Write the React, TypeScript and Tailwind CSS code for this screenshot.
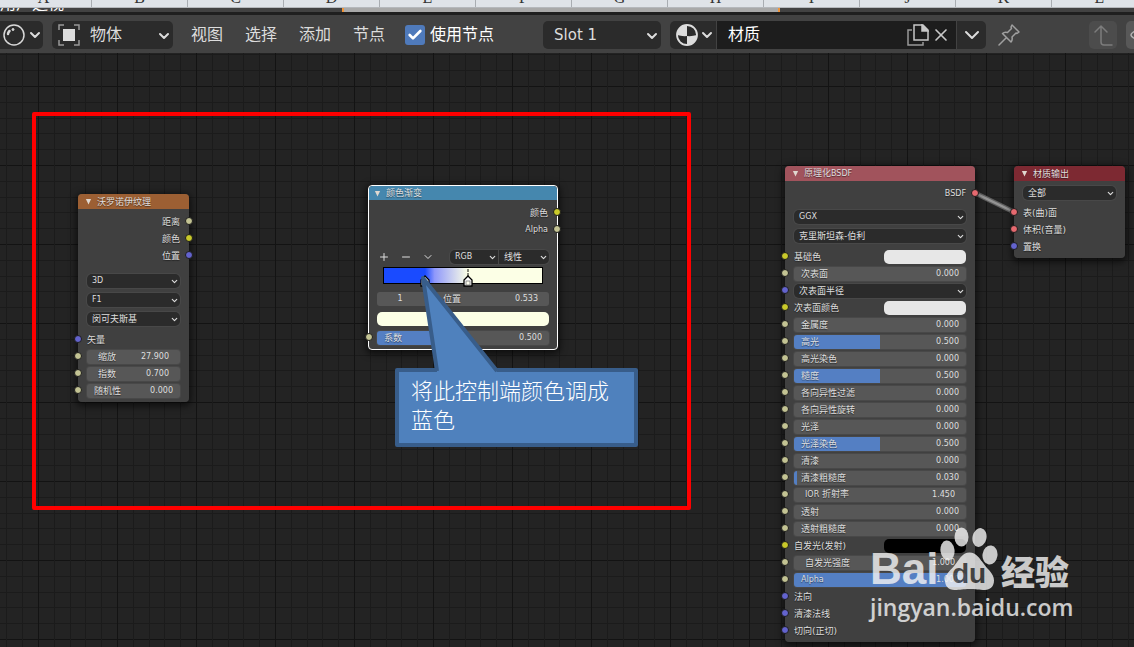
import type { ReactNode } from "react";
import { Check, ChevronDown, Minus, Plus, X } from "lucide-react";
import { clsx } from "clsx";

type SocketKind = "value" | "color" | "vector" | "shader";

interface Field {
  kind: SocketKind;
  label: string;
  type: "value" | "swatch" | "select" | "plain";
  value?: string;
  fill?: number;
  indent?: boolean;
}

const SOCKET_COLORS: Record<SocketKind, string> = {
  value: "bg-[#c3c393]",
  color: "bg-[#c9c92a]",
  vector: "bg-[#6363ce]",
  shader: "bg-[#e6696f]",
};

const SHEET_COLUMNS = ["A", "B", "C", "D", "E", "F", "G", "H", "I", "J", "K", "L"];

const MENUS = ["视图", "选择", "添加", "节点"];

const VORONOI_FIELDS: Field[] = [
  { kind: "vector", label: "矢量", type: "plain" },
  { kind: "value", label: "缩放", type: "value", value: "27.900", indent: true },
  { kind: "value", label: "指数", type: "value", value: "0.700", indent: true },
  { kind: "value", label: "随机性", type: "value", value: "0.000" },
];

const BSDF_FIELDS: Field[] = [
  { kind: "color", label: "基础色", type: "swatch", value: "#e7e7e7" },
  { kind: "value", label: "次表面", type: "value", value: "0.000" },
  { kind: "vector", label: "次表面半径", type: "select" },
  { kind: "color", label: "次表面颜色", type: "swatch", value: "#e7e7e7" },
  { kind: "value", label: "金属度", type: "value", value: "0.000" },
  { kind: "value", label: "高光", type: "value", value: "0.500", fill: 50 },
  { kind: "value", label: "高光染色", type: "value", value: "0.000" },
  { kind: "value", label: "糙度", type: "value", value: "0.500", fill: 50 },
  { kind: "value", label: "各向异性过滤", type: "value", value: "0.000" },
  { kind: "value", label: "各向异性旋转", type: "value", value: "0.000" },
  { kind: "value", label: "光泽", type: "value", value: "0.000" },
  { kind: "value", label: "光泽染色", type: "value", value: "0.500", fill: 50 },
  { kind: "value", label: "清漆", type: "value", value: "0.000" },
  { kind: "value", label: "清漆粗糙度", type: "value", value: "0.030", fill: 2 },
  { kind: "value", label: "IOR 折射率", type: "value", value: "1.450", indent: true },
  { kind: "value", label: "透射", type: "value", value: "0.000" },
  { kind: "value", label: "透射粗糙度", type: "value", value: "0.000" },
  { kind: "color", label: "自发光(发射)", type: "swatch", value: "#000000" },
  { kind: "value", label: "自发光强度", type: "value", value: "1.000", indent: true },
  { kind: "value", label: "Alpha", type: "value", value: "1.000", fill: 100 },
  { kind: "vector", label: "法向", type: "plain" },
  { kind: "vector", label: "清漆法线", type: "plain" },
  { kind: "vector", label: "切向(正切)", type: "plain" },
];

// Latin runs are set one pixel smaller than the Chinese glyphs beside them
function Label({ text }: { text: string }) {
  return (
    <span className="whitespace-nowrap">
      {text.split(/([A-Za-z]+)/).map((part, i) =>
        /[A-Za-z]/.test(part) ? (
          <span key={i} className="text-[8px]">
            {part}
          </span>
        ) : (
          part
        ),
      )}
    </span>
  );
}

function Socket({ kind, side }: { kind: SocketKind; side: "left" | "right" }) {
  return (
    <span
      className={clsx(
        "absolute top-1 size-2 rounded-full border border-[#1c1c1c]",
        SOCKET_COLORS[kind],
        side === "left" ? "-left-1" : "-right-1",
      )}
    />
  );
}

function NodeSelect({ label, className }: { label: string; className: string }) {
  return (
    <div className={clsx("relative h-[14px]", className)}>
      <select
        aria-label={label}
        className={clsx(
          "block h-full w-full appearance-none rounded-[inherit] bg-[#2b2b2b] pl-[5px] leading-[14px] text-[#dedede] shadow-[0_0_0_1px_#484848]",
          /^\w+$/.test(label) ? "text-[8px]" : "text-[9px]",
        )}
      >
        <option>{label}</option>
      </select>
      <ChevronDown className="pointer-events-none absolute right-px top-[3px] size-[9px]" strokeWidth={3} />
    </div>
  );
}

function ValueField({ label, value, fill = 0, indent }: { label: string; value: string; fill?: number; indent?: boolean }) {
  return (
    <label
      className={clsx(
        "flex h-[14px] flex-1 items-center justify-between rounded-[3px] bg-[#575757] shadow-[0_0_0_1px_#484848]",
        indent ? "px-[11px]" : "px-[7px]",
      )}
      style={{ backgroundImage: `linear-gradient(90deg, #547fc3 ${fill}%, transparent ${fill}%)` }}
    >
      <Label text={label} />
      <input
        type="text"
        defaultValue={value}
        className="w-8 min-w-0 bg-transparent text-right text-[8px] leading-[14px]"
      />
    </label>
  );
}

function Swatch({ label, value, className }: { label: string; value: string; className: string }) {
  return (
    <input
      type="color"
      aria-label={label}
      defaultValue={value}
      className={clsx(
        "block h-[14px] appearance-none overflow-hidden rounded-[5px] border-0 bg-transparent p-0 [&::-webkit-color-swatch]:border-0 [&::-webkit-color-swatch-wrapper]:p-0",
        className,
      )}
    />
  );
}

function FieldRow({ field }: { field: Field }) {
  return (
    <div className="relative flex h-[17px] items-center justify-between px-[9px]">
      <Socket kind={field.kind} side="left" />
      {field.type === "value" && (
        <ValueField label={field.label} value={field.value ?? ""} fill={field.fill} indent={field.indent} />
      )}
      {field.type === "select" && <NodeSelect label={field.label} className="w-full rounded-[5px]" />}
      {field.type === "plain" && <Label text={field.label} />}
      {field.type === "swatch" && (
        <>
          <Label text={field.label} />
          <Swatch label={field.label} value={field.value ?? ""} className="w-[82px]" />
        </>
      )}
    </div>
  );
}

function OutputRow({ kind, label }: { kind: SocketKind; label: string }) {
  return (
    <div className="relative flex h-[17px] items-center justify-end px-[9px]">
      <Label text={label} />
      <Socket kind={kind} side="right" />
    </div>
  );
}

interface NodeProps {
  title: string;
  header: string;
  place: string;
  active?: boolean;
  children: ReactNode;
}

function Node({ title, header, place, active, children }: NodeProps) {
  return (
    <section
      className={clsx(
        "absolute rounded-[4px] bg-[#424242]/95 pb-[3px] text-[9px] leading-[14px] text-[#dedede] shadow-[0_2px_7px_2px_rgba(0,0,0,0.6)] [text-shadow:0_1px_1px_rgba(0,0,0,0.5)]",
        active && "border border-white",
        place,
      )}
    >
      <h2
        className={clsx(
          "flex items-center gap-[5px] rounded-t-[4px]",
          active ? "h-[14px] px-[5px]" : "h-[15px] px-[7px]",
          header,
        )}
      >
        <svg viewBox="0 0 8 8" className="size-[7px] fill-[#e0d8d0]">
          <path d="M1 1h6L4 7.500z" />
        </svg>
        <Label text={title} />
      </h2>
      <div className="pt-1">{children}</div>
    </section>
  );
}

function VoronoiNode() {
  return (
    <Node title="沃罗诺伊纹理" header="bg-[#9c5f33]" place="left-[78px] top-[141px] w-[111px]">
      <OutputRow kind="value" label="距离" />
      <OutputRow kind="color" label="颜色" />
      <OutputRow kind="vector" label="位置" />
      <div className="flex flex-col gap-[5px] px-[9px] pb-[5px] pt-[10px]">
        <NodeSelect label="3D" className="w-full rounded-[5px]" />
        <NodeSelect label="F1" className="w-full rounded-[5px]" />
        <NodeSelect label="闵可夫斯基" className="w-full rounded-[5px]" />
      </div>
      {VORONOI_FIELDS.map((field) => (
        <FieldRow key={field.label} field={field} />
      ))}
    </Node>
  );
}

function StopHandle({ place, selected }: { place: string; selected?: boolean }) {
  return (
    <svg viewBox="0 0 10 19" className={clsx("absolute top-0 h-[19px] w-[10px]", place)}>
      {selected && <path d="M5 1v3M5 5v3" stroke="#111" />}
      <path d="M1 18v-6l4-4 4 4v6z" fill="#fff" stroke="#000" strokeWidth="1.3" />
      <rect x="3" y="13" width="4" height="4" fill={selected ? "#fffff0" : "#1a4bff"} stroke="#777" strokeWidth="0.8" />
    </svg>
  );
}

function ColorRampNode() {
  return (
    <Node title="颜色渐变" header="bg-[#4587ae]" place="left-[368px] top-[132px] w-[190px]" active>
      <OutputRow kind="color" label="颜色" />
      <OutputRow kind="value" label="Alpha" />
      <div className="mt-3 flex items-center justify-between px-2">
        <div className="flex gap-[10px] pl-px">
          <button type="button" aria-label="添加色标">
            <Plus className="size-3" strokeWidth={2} />
          </button>
          <button type="button" aria-label="删除色标">
            <Minus className="size-3" strokeWidth={2} />
          </button>
          <button type="button" aria-label="色带选项">
            <ChevronDown className="size-3" strokeWidth={2} />
          </button>
        </div>
        <div className="flex gap-px">
          <NodeSelect label="RGB" className="w-12 rounded-l-[5px]" />
          <NodeSelect label="线性" className="w-[50px] rounded-r-[5px]" />
        </div>
      </div>
      <div className="relative mx-[14px] mt-[3px] h-[17px] border border-black bg-[linear-gradient(90deg,#1a4bff_26%,#8f98fb_32%,#fcffe6_53%)]">
        <StopHandle place="left-[36px]" />
        <StopHandle place="left-[79px]" selected />
      </div>
      <div className="flex flex-col px-2 pt-2">
        <div className="flex">
          <input
            type="text"
            aria-label="色标"
            defaultValue="1"
            className="h-[14px] w-[46px] rounded-l-[3px] bg-[#575757] text-center text-[8px]"
          />
          <label className="flex h-[14px] flex-1 items-center justify-between rounded-r-[3px] bg-[#575757] pl-5 pr-[11px]">
            <span>位置</span>
            <input type="text" defaultValue="0.533" className="w-8 bg-transparent text-right text-[8px]" />
          </label>
        </div>
        <Swatch label="色标颜色" value="#fcffe6" className="mt-[6px] w-full" />
      </div>
      <div className="relative mt-[3px] flex h-[17px] items-center px-2">
        <Socket kind="value" side="left" />
        <ValueField label="系数" value="0.500" fill={50} />
      </div>
    </Node>
  );
}

function BsdfNode() {
  return (
    <Node title="原理化BSDF" header="bg-[#a1535c]" place="left-[785px] top-[113px] w-[190px]">
      <OutputRow kind="shader" label="BSDF" />
      <div className="flex flex-col gap-[5px] px-[9px] pb-[5px] pt-2">
        <NodeSelect label="GGX" className="w-full rounded-[5px]" />
        <NodeSelect label="克里斯坦森-伯利" className="w-full rounded-[5px]" />
      </div>
      {BSDF_FIELDS.map((field) => (
        <FieldRow key={field.label} field={field} />
      ))}
    </Node>
  );
}

function OutputNode() {
  return (
    <Node title="材质输出" header="bg-[#7d2932]" place="left-[1014px] top-[113px] w-[111px]">
      <div className="px-[9px] pb-1 pt-px">
        <NodeSelect label="全部" className="w-full rounded-[5px]" />
      </div>
      <FieldRow field={{ kind: "shader", label: "表(曲)面", type: "plain" }} />
      <FieldRow field={{ kind: "shader", label: "体积(音量)", type: "plain" }} />
      <FieldRow field={{ kind: "vector", label: "置换", type: "plain" }} />
    </Node>
  );
}

function Callout() {
  return (
    <>
      <p className="absolute left-[395px] top-[315px] h-[79px] w-[243px] rounded-[2px] border-4 border-[#385d8a] bg-[#4f81bd] px-3 py-[5px] text-[22px] font-light leading-[29px] text-white">
        将此控制端颜色调成
        <br />
        蓝色
      </p>
      <svg viewBox="0 0 90 104" className="pointer-events-none absolute left-[415px] top-[217px] h-[104px] w-[90px]">
        <path d="M22 102 8 8l74 94z" fill="#4f81bd" />
        <path d="M22 101 8 8l74 93" fill="none" stroke="#385d8a" strokeWidth="4" strokeLinejoin="round" />
      </svg>
    </>
  );
}

function Watermark() {
  return (
    <div className="absolute left-[870px] top-[474px] text-[#f4f4f4] opacity-80">
      <div className="flex h-[64px] items-end whitespace-nowrap">
        <span className="w-[70px] font-['Liberation_Sans',sans-serif] text-[44px] font-bold leading-[44px]">Bai</span>
        <div className="relative h-[64px] w-[58px]">
          <svg viewBox="0 0 58 64" className="size-full fill-current">
            <ellipse cx="7.500" cy="23.500" rx="7" ry="10" transform="rotate(-8 7.500 23.500)" />
            <ellipse cx="21.500" cy="10" rx="7" ry="9.500" />
            <ellipse cx="39.500" cy="10.500" rx="7" ry="9.500" transform="rotate(12 39.500 10.500)" />
            <ellipse cx="50" cy="28" rx="7.500" ry="9.500" transform="rotate(8 50 28)" />
            <path d="M29.500 25.500c7 0 10 6 14 11 5 7 10.500 10 10.500 17 0 6-4 9.500-9 9.500-6 0-9-1-15.500-1s-9 1-15 1c-6 0-9.500-4-9.500-9.500 0-7 6-10 11-17 4-5 6.500-11 13.500-11z" />
          </svg>
          <span className="absolute bottom-[3px] left-3 font-['Liberation_Sans',sans-serif] text-[28px] font-bold leading-[28px] text-[#444]">
            du
          </span>
        </div>
        <span className="pl-[3px] text-[34px] font-black leading-[36px]">经验</span>
      </div>
      <p className="font-['Open_Sans',sans-serif] text-[23px] font-semibold leading-[32px]">jingyan.baidu.com</p>
    </div>
  );
}

function Background() {
  return (
    <>
      <div className="flex h-2 items-end overflow-hidden border-b border-[#b5b8bc] bg-[#dfe3e8] font-['Liberation_Serif',serif] text-base leading-4 text-[#333]">
        {SHEET_COLUMNS.map((name) => (
          <span
            key={name}
            className="flex w-24 shrink-0 justify-center border-r border-[#a9adb2] pb-px first:-ml-1"
          >
            {name}
          </span>
        ))}
      </div>
      <div className="flex h-1 items-end overflow-hidden bg-[#424242]">
        <span className="w-[342px] shrink-0 whitespace-nowrap leading-4 text-white">用户透视</span>
        <span className="h-1 w-[438px] shrink-0 border-l-2 border-r-2 border-[#f0953a] bg-[#a9a9a9]" />
      </div>
    </>
  );
}

function Toolbar() {
  return (
    <header className="flex h-[41px] items-center overflow-hidden border-t-[3px] border-[#1f1f1f] bg-[#424242] pt-0.5 text-base text-[#dcdcdc]">
      <button
        type="button"
        aria-label="着色器类型"
        className="flex h-7 w-[43px] shrink-0 items-center gap-[2px] rounded-r-[5px] bg-[#2b2b2b] pl-[3px]"
      >
        <svg viewBox="0 0 22 22" className="size-[22px]" fill="none" stroke="#d8d8d8">
          <circle cx="11" cy="11" r="10" strokeWidth="1.500" />
          <path d="M5 10c0-1 .5-2 1.500-3" strokeWidth="2.500" strokeLinecap="round" />
          <circle cx="10" cy="5.500" r="1" fill="#d8d8d8" />
        </svg>
        <ChevronDown className="size-4" strokeWidth={3} />
      </button>
      <div className="relative ml-[9px] h-7 w-[121px] shrink-0">
        <select
          aria-label="着色类型"
          className="block h-full w-full appearance-none rounded-[5px] bg-[#2b2b2b] pl-[38px]"
        >
          <option>物体</option>
        </select>
        <svg viewBox="0 0 22 22" className="pointer-events-none absolute left-1.5 top-[3px] size-[22px]">
          <path
            d="M1 6V1h5M16 1h5v5M21 16v5h-5M6 21H1v-5"
            fill="none"
            stroke="#999"
            strokeWidth="1.500"
          />
          <rect x="5" y="5" width="12" height="12" fill="#dcdcdc" />
        </svg>
        <ChevronDown className="pointer-events-none absolute right-px top-[7px] size-4" strokeWidth={3} />
      </div>
      <nav className="ml-[18px] flex shrink-0 gap-[22px]">
        {MENUS.map((menu) => (
          <button key={menu} type="button">
            {menu}
          </button>
        ))}
      </nav>
      <label className="ml-5 flex shrink-0 items-center gap-[5px] text-white">
        <span className="relative size-5">
          <input type="checkbox" defaultChecked className="block size-5 appearance-none rounded-[3px] bg-[#4f7abb]" />
          <Check className="pointer-events-none absolute left-0.5 top-0.5 size-4" strokeWidth={4} />
        </span>
        使用节点
      </label>
      <div className="relative ml-[49px] h-7 w-[118px] shrink-0">
        <select
          aria-label="材质槽"
          className="block h-full w-full appearance-none rounded-[5px] bg-[#2b2b2b] pl-[11px] text-[15px]"
        >
          <option>Slot 1</option>
        </select>
        <ChevronDown className="pointer-events-none absolute right-px top-[7px] size-4" strokeWidth={3} />
      </div>
      <div className="ml-[9px] flex h-7 w-[316px] shrink-0 gap-px overflow-hidden rounded-[5px]">
        <button
          type="button"
          aria-label="浏览材质"
          className="flex w-[46px] shrink-0 items-center gap-px bg-[#2b2b2b] pl-1.5"
        >
          <svg viewBox="0 0 22 22" className="size-[22px] shrink-0">
            <path d="M11 12V1A10 10 0 0 0 1 11q5 1.500 10 1zM11 12q5 .5 10-1A10 10 0 0 1 11 21z" fill="#dcdcdc" />
            <circle cx="11" cy="11" r="10" fill="none" stroke="#dcdcdc" strokeWidth="1.800" />
          </svg>
          <ChevronDown className="size-4 shrink-0" strokeWidth={3} />
        </button>
        <div className="flex min-w-0 flex-1 items-center bg-[#1d1d1d]">
          <input
            type="text"
            aria-label="材质名称"
            defaultValue="材质"
            className="min-w-0 flex-1 bg-transparent pl-[11px] text-white"
          />
          <button type="button" aria-label="新建材质" className="shrink-0">
            <svg viewBox="0 0 22 22" className="size-[22px]" fill="none" stroke="#c8c8c8" strokeWidth="1.500">
              <path d="M7 1h9l5 5v10H7z" />
              <path d="M15 1v6h6z" fill="#c8c8c8" />
              <path d="M5 6H1v15h15v-3" stroke="#999" />
            </svg>
          </button>
          <button type="button" aria-label="断开材质" className="shrink-0 pl-0.5 pr-[5px]">
            <X className="size-5 text-[#c8c8c8]" strokeWidth={2} />
          </button>
        </div>
        <button
          type="button"
          aria-label="更多"
          className="flex w-[29px] shrink-0 items-center justify-center bg-[#2b2b2b]"
        >
          <ChevronDown className="size-6" strokeWidth={2} />
        </button>
      </div>
      <button type="button" aria-label="固定" className="ml-3 shrink-0 text-[#a0a0a0]">
        <svg
          viewBox="0 0 22 22"
          className="size-[22px]"
          fill="none"
          stroke="currentColor"
          strokeWidth="1.500"
          strokeLinejoin="round"
          strokeLinecap="round"
        >
          <path d="m14 1 7 7-2 1.500-1-.5-4 4c.5 2 .3 3.500-1 5L4.500 9.500C6 8 8 8 9.500 8.500l4-4L13 3zM8 14l-7 7" />
        </svg>
      </button>
      <div className="ml-auto flex gap-[9px] text-[#7c7c7c]">
        <button
          type="button"
          aria-label="上一级"
          className="flex size-7 items-center justify-center rounded-[5px] bg-[#4c4c4c]"
        >
          <svg viewBox="0 0 20 22" className="h-[22px] w-5" fill="none" stroke="currentColor" strokeWidth="1.500">
            <path d="M2 8l6-6 6 6M8 2v16c0 2 1 3 3 3h8" strokeLinecap="round" />
          </svg>
        </button>
        <button
          type="button"
          aria-label="吸附"
          className="flex h-7 w-2 items-center overflow-hidden rounded-l-[5px] bg-[#585858] pl-1 text-[#b0b0b0]"
        >
          <svg viewBox="0 0 8 12" className="h-3 w-2 shrink-0" fill="none" stroke="currentColor" strokeWidth="1.500">
            <path d="M7 1C3 3 1 4 1 6s3 3 6 5" />
          </svg>
        </button>
      </div>
    </header>
  );
}

export default function App() {
  return (
    <div className="flex min-h-screen flex-col overflow-hidden bg-[#232323] font-['DejaVu_Sans','Noto_Sans_CJK_SC',sans-serif]">
      <Background />
      <Toolbar />
      <main className="relative flex-1 overflow-hidden bg-[linear-gradient(90deg,#131313_1px,transparent_1px_16px,#1b1b1b_16px_17px,transparent_17px_32px,#1b1b1b_32px_33px,transparent_33px_47px,#1b1b1b_47px_48px,transparent_48px_63px,#1b1b1b_63px_64px,transparent_64px),linear-gradient(#131313_1px,transparent_1px_16px,#1b1b1b_16px_17px,transparent_17px_32px,#1b1b1b_32px_33px,transparent_33px_47px,#1b1b1b_47px_48px,transparent_48px_63px,#1b1b1b_63px_64px,transparent_64px)] bg-[length:79px_79px] bg-[position:38px_33px]">
        <svg viewBox="0 0 40 24" className="absolute left-[975px] top-[138px] h-6 w-10">
          <path d="M0 2 39 21" stroke="#5f5f5f" strokeWidth="5" />
          <path d="M0 2 39 21" stroke="#949494" strokeWidth="2.500" />
        </svg>
        <VoronoiNode />
        <ColorRampNode />
        <BsdfNode />
        <OutputNode />
        <Callout />
        <div className="pointer-events-none absolute left-8 top-[59px] h-[398px] w-[659px] rounded-[2px] border-4 border-[#ff0000]" />
        <Watermark />
      </main>
    </div>
  );
}
